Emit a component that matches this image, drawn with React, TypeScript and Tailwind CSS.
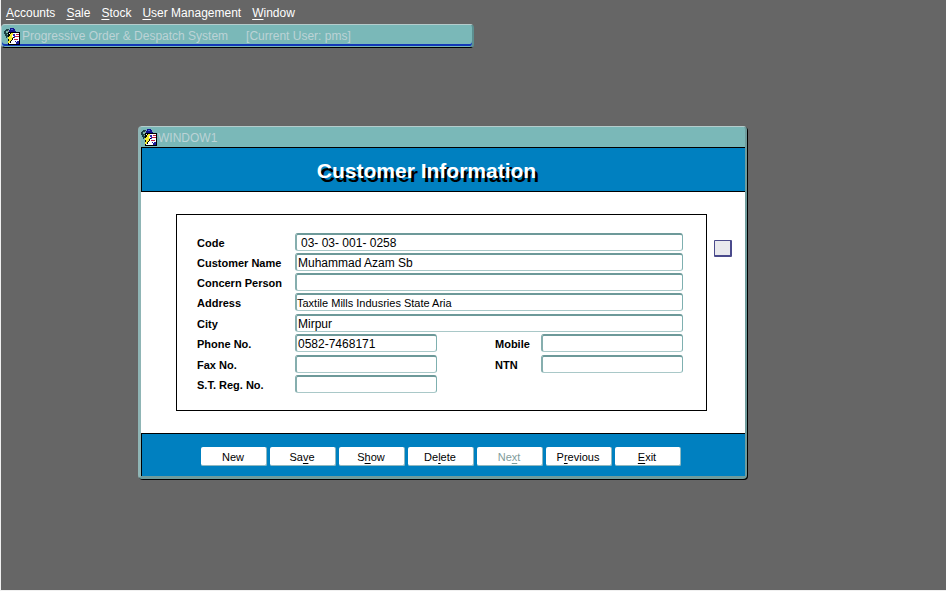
import type { ReactNode } from "react";

function Mnemonic({ text, at }: { text: string; at: number }) {
  if (at < 0) return <>{text}</>;
  return (
    <span>
      {text.slice(0, at)}
      <span className="underline decoration-1 underline-offset-2">{text[at]}</span>
      {text.slice(at + 1)}
    </span>
  );
}

function FormIcon() {
  return (
    <svg width="16" height="17" viewBox="0 0 16 17" shapeRendering="crispEdges" aria-hidden="true" className="shrink-0">
      <path d="M2 1h3v1h1v7H3v1H2V8H1V6H0V3h1V2h1z" fill="#1c3f44" />
      <path d="M2 3h2v2H2zM3 6h1v1H3z" fill="#7fb8a8" />
      <path d="M4 2h1v2H4z" fill="#8c98a8" />
      <path d="M6 0h4v1h1v2h1v1H5V2h1z" fill="#10108c" />
      <path d="M7 1h2v1H7z" fill="#4a68d0" />
      <path d="M4 4h12v13H4z" fill="#000" />
      <path d="M5 5h10v11H5z" fill="#fff" />
      <path d="M9 6h2v2H9zM10 8h1v2h-1z" fill="#2a2ab0" />
      <path d="M12 6h3v1h-3zM11 8h4v1h-4zM10 11h4v1h-4z" fill="#c02040" />
      <path d="M11 13h1v1h-1zM13 13h2v3h-3v-2h1z" fill="#1c1c9c" />
      <path d="M7 5h2v2H8v2h1v1H8v2H7v1H6v2H4v-2h1v-2H4V9h1V8h1V6h1z" fill="#f4ec30" />
      <path d="M6 5h1v1H6zM5 6h1v2H5zM9 9h1v1H9zM8 10h1v2H8zM7 12h1v1H7zM6 13h1v2H6z" fill="#000" />
    </svg>
  );
}

const fieldFrame =
  "h-[18px] min-w-0 rounded-[3px] border border-t-2 border-l-2 border-[#7fb0b0] border-t-[#6d9999] border-l-[#86aeae] border-b-[#a9c8c8] bg-white";

function Field({ id, label, value = "", box = "flex-1", text = "text-[12px] pl-px" }: { id: string; label: string; value?: string; box?: string; text?: string }) {
  return (
    <>
      <label htmlFor={id} className="w-[98px] shrink-0 pt-px text-[11px] font-bold whitespace-nowrap">{label}</label>
      <input id={id} defaultValue={value} className={`${fieldFrame} ${box} ${text}`} />
    </>
  );
}

function SideField({ id, label }: { id: string; label: string }) {
  return (
    <>
      <label htmlFor={id} className="ml-auto w-[46px] pt-px text-[11px] font-bold">{label}</label>
      <input id={id} className={`${fieldFrame} w-[142px]`} />
    </>
  );
}

function Row({ children }: { children: ReactNode }) {
  return <div className="flex items-center">{children}</div>;
}

const menus = ["Accounts", "Sale", "Stock", "User Management", "Window"];

const actions = [
  { text: "New", at: -1 },
  { text: "Save", at: 2 },
  { text: "Show", at: 1 },
  { text: "Delete", at: 2 },
  { text: "Next", at: 2, disabled: true },
  { text: "Previous", at: 1 },
  { text: "Exit", at: 0 },
];

export default function App() {
  return (
    <div className="relative min-h-screen overflow-hidden border-b border-l border-[#f0f0f0] bg-[#666] font-['Liberation_Sans',Arial,sans-serif] text-[12px] leading-4 text-black">
      <nav className="flex h-6 items-center gap-[11px] pl-[5px] pt-0.5 text-white">
        {menus.map((menu) => (
          <button key={menu} className="whitespace-nowrap">
            <Mnemonic text={menu} at={0} />
          </button>
        ))}
      </nav>

      <header className="flex h-6 w-[473px] items-center rounded-[4px] border border-r-2 border-b-black border-l-[#a9c9c9] border-r-[#5c8f90] border-t-[#b5cccc] bg-[#7ab8b8] pl-0.5 text-[#bcd3d6] shadow-[inset_0_-1px_0_#7ab8b8,inset_0_-3px_0_#1238b8]">
        <FormIcon />
        <span className="pl-0.5 whitespace-pre">Progressive Order &amp; Despatch System</span>
        <span className="pl-[18px] whitespace-pre">[Current User: pms]</span>
      </header>

      <section className="absolute left-[137px] top-[126px] w-[609px] rounded-[4px] border-b-[3px] border-l-[3px] border-r-2 border-t border-b-[#6f9b9c] border-l-[#8fb5b5] border-r-[#6f9b9c] border-t-[#b5cccc] bg-[#7ab8b8] shadow-[1px_1px_0_#000]">
        <div className="flex h-5 items-center text-[#bcd3d6]">
          <FormIcon />
          <span className="pt-0.5 pl-px">WINDOW1</span>
        </div>

        <div className="flex h-[45px] items-center justify-center border-y border-l border-black bg-[#0080c0] pt-0.5 pr-[34px]">
          <h1 className="text-[21px] leading-6 font-bold whitespace-nowrap text-white [text-shadow:3px_4px_0_#000]">Customer Information</h1>
        </div>

        <div className="flex items-start bg-white pt-[22px] pr-[13px] pb-[22px] pl-[35px]">
          <form className="flex flex-1 flex-col gap-[3px] border border-black pt-[18px] pr-[23px] pb-[17px] pl-5">
            <div className="flex flex-col gap-0.5">
              <Row><Field id="code" label="Code" value="03- 03- 001- 0258" text="text-[12px] pl-1" /></Row>
              <Row><Field id="name" label="Customer Name" value="Muhammad Azam Sb" /></Row>
              <Row><Field id="person" label="Concern Person" /></Row>
              <Row><Field id="address" label="Address" value="Taxtile Mills Indusries State Aria" text="text-[11px]" /></Row>
            </div>
            <div className="flex flex-col gap-0.5">
              <Row><Field id="city" label="City" value="Mirpur" /></Row>
              <Row>
                <Field id="phone" label="Phone No." value="0582-7468171" box="w-[142px]" />
                <SideField id="mobile" label="Mobile" />
              </Row>
            </div>
            <div className="flex flex-col gap-0.5">
              <Row>
                <Field id="fax" label="Fax No." box="w-[142px]" />
                <SideField id="ntn" label="NTN" />
              </Row>
              <Row><Field id="streg" label="S.T. Reg. No." box="w-[142px]" /></Row>
            </div>
          </form>
          <button aria-label="List" className="mt-[26px] ml-[7px] h-[17px] w-[18px] rounded-[1px] border border-r-2 border-b-2 border-[#4a4a8c] bg-[#e9e9ee]" />
        </div>

        <div className="flex justify-center gap-[3px] border-t border-l border-black bg-[#0080c0] pt-[13px] pr-1.5 pb-[10px]">
          {actions.map((action) => (
            <button
              key={action.text}
              disabled={action.disabled}
              className="h-[19px] w-[66px] rounded-[2px] border-r border-b border-[#8fb8c0] bg-white pt-0.5 text-[11px] leading-4 disabled:text-[#7f9c9c]"
            >
              <Mnemonic text={action.text} at={action.at} />
            </button>
          ))}
        </div>
      </section>
    </div>
  );
}
